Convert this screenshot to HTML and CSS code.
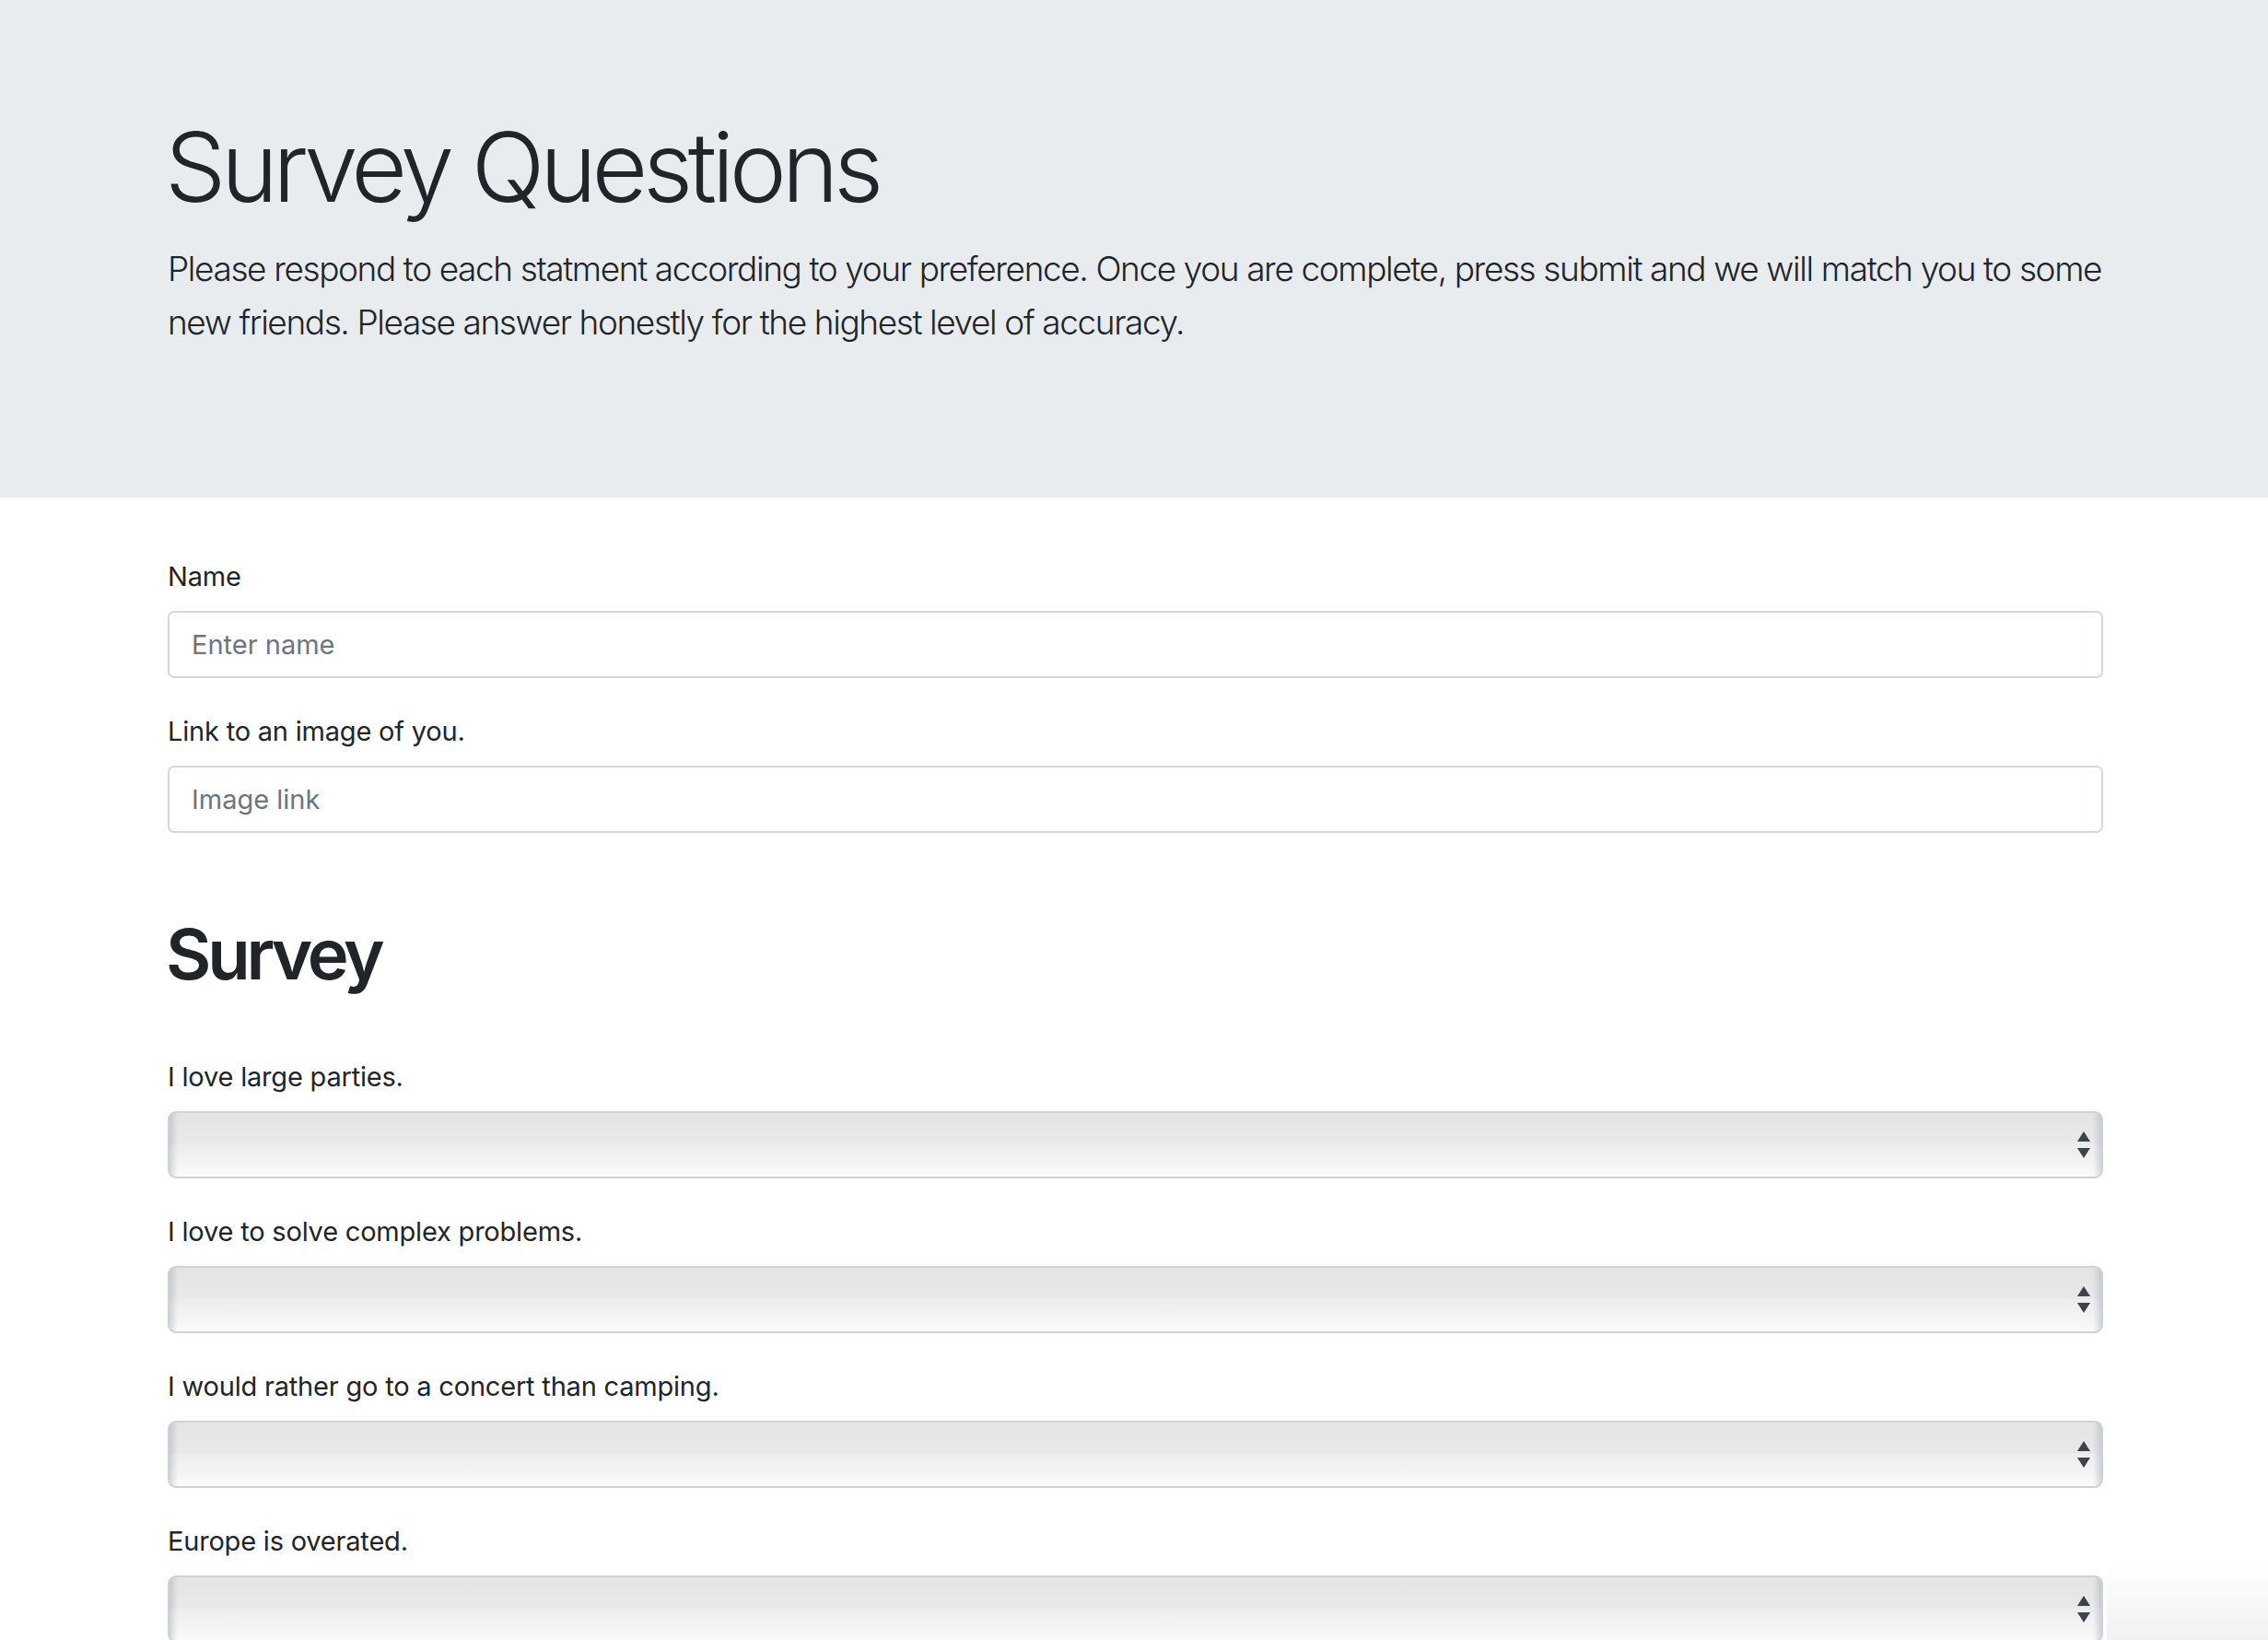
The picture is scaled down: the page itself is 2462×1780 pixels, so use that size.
FILE: index.html
```html
<!DOCTYPE html>
<html lang="en">
<head>
<meta charset="utf-8">
<title>Survey Questions</title>
<link rel="stylesheet" href="styles.css">
</head>
<body>
<header class="jumbotron">
  <div class="container">
    <h1 class="display">Survey Questions</h1>
    <p class="lead">Please respond to each statment according to your preference. Once you are complete, press submit and we will match you to some new friends. Please answer honestly for the highest level of accuracy.</p>
  </div>
</header>
<main class="container">
  <form class="survey-form">
    <div class="form-group">
      <label class="form-label" for="name">Name</label>
      <input class="form-control" id="name" type="text" placeholder="Enter name">
    </div>
    <div class="form-group">
      <label class="form-label" for="photo">Link to an image of you.</label>
      <input class="form-control" id="photo" type="text" placeholder="Image link">
    </div>
    <h2 class="section-title">Survey</h2>
    <div class="form-group">
      <label class="form-label" for="q1">I love large parties.</label>
      <div class="select-wrap">
        <select class="form-select" id="q1"><option></option></select>
        <svg class="select-arrows" width="14" height="30" viewBox="0 0 14 30"><path d="M7 0 L14 11 L0 11 Z" fill="#3d434a"/><path d="M0 18 L14 18 L7 29 Z" fill="#3d434a"/></svg>
      </div>
    </div>
    <div class="form-group">
      <label class="form-label" for="q2">I love to solve complex problems.</label>
      <div class="select-wrap">
        <select class="form-select" id="q2"><option></option></select>
        <svg class="select-arrows" width="14" height="30" viewBox="0 0 14 30"><path d="M7 0 L14 11 L0 11 Z" fill="#3d434a"/><path d="M0 18 L14 18 L7 29 Z" fill="#3d434a"/></svg>
      </div>
    </div>
    <div class="form-group">
      <label class="form-label" for="q3">I would rather go to a concert than camping.</label>
      <div class="select-wrap">
        <select class="form-select" id="q3"><option></option></select>
        <svg class="select-arrows" width="14" height="30" viewBox="0 0 14 30"><path d="M7 0 L14 11 L0 11 Z" fill="#3d434a"/><path d="M0 18 L14 18 L7 29 Z" fill="#3d434a"/></svg>
      </div>
    </div>
    <div class="form-group">
      <label class="form-label" for="q4">Europe is overated.</label>
      <div class="select-wrap">
        <select class="form-select" id="q4"><option></option></select>
        <svg class="select-arrows" width="14" height="30" viewBox="0 0 14 30"><path d="M7 0 L14 11 L0 11 Z" fill="#3d434a"/><path d="M0 18 L14 18 L7 29 Z" fill="#3d434a"/></svg>
      </div>
    </div>
  </form>
</main>
<div class="corner-shade"></div>
</body>
</html>
```
FILE: styles.css
```css
html, body {
  margin: 0;
  padding: 0;
}
body {
  font-family: Inter, "Noto Sans", "Liberation Sans", sans-serif;
  color: #212529;
  background: #ffffff;
  overflow: hidden;
  height: 1780px;
  position: relative;
}
.container {
  width: 2101px;
  margin: 0 0 0 182px;
}
.jumbotron {
  background: #e9ecef;
  padding: 118px 0 161px;
  margin-bottom: 63px;
}
.display {
  font-size: 105px;
  font-weight: 300;
  line-height: 1.2;
  letter-spacing: -5.4px;
  margin: 0 0 19px -3px;
}
.lead {
  font-size: 37px;
  font-weight: 300;
  line-height: 58px;
  letter-spacing: -1.4px;
  margin: 0;
}
.form-group {
  margin-bottom: 35px;
}
.form-label {
  display: block;
  font-size: 29px;
  line-height: 46px;
  margin-bottom: 14px;
  letter-spacing: -0.2px;
}
.form-control {
  display: block;
  box-sizing: border-box;
  width: 100%;
  height: 73px;
  padding: 0 24px;
  border: 2px solid #d3d8dd;
  border-radius: 7px;
  font-family: inherit;
  font-size: 29px;
  color: #495057;
  background: #fff;
}
.form-control::placeholder {
  color: #6c757d;
}
.section-title {
  font-size: 76px;
  font-weight: 600;
  letter-spacing: -4.2px;
  line-height: 1.2;
  margin: 86px 0 65px -2px;
}
.select-wrap {
  position: relative;
}
.form-select {
  display: block;
  box-sizing: border-box;
  width: 100%;
  height: 73px;
  -webkit-appearance: none;
  appearance: none;
  border: 2px solid #cdd2d7;
  border-radius: 9px;
  background:
    linear-gradient(to right, rgba(120,130,140,0.28), rgba(120,130,140,0) 9px, rgba(120,130,140,0) calc(100% - 9px), rgba(120,130,140,0.28)),
    linear-gradient(to bottom, #e4e4e4 0%, #e8e8e8 48%, #ededed 50%, #f4f4f4 80%, #fbfbfb 100%);
  font-family: inherit;
  font-size: 29px;
}
.select-arrows {
  position: absolute;
  right: 14px;
  top: 22px;
}
.corner-shade {
  position: absolute;
  right: 0;
  bottom: 0;
  width: 175px;
  height: 90px;
  background: linear-gradient(to bottom, rgba(235,235,235,0), rgba(235,235,235,0.7));
  pointer-events: none;
}
```
